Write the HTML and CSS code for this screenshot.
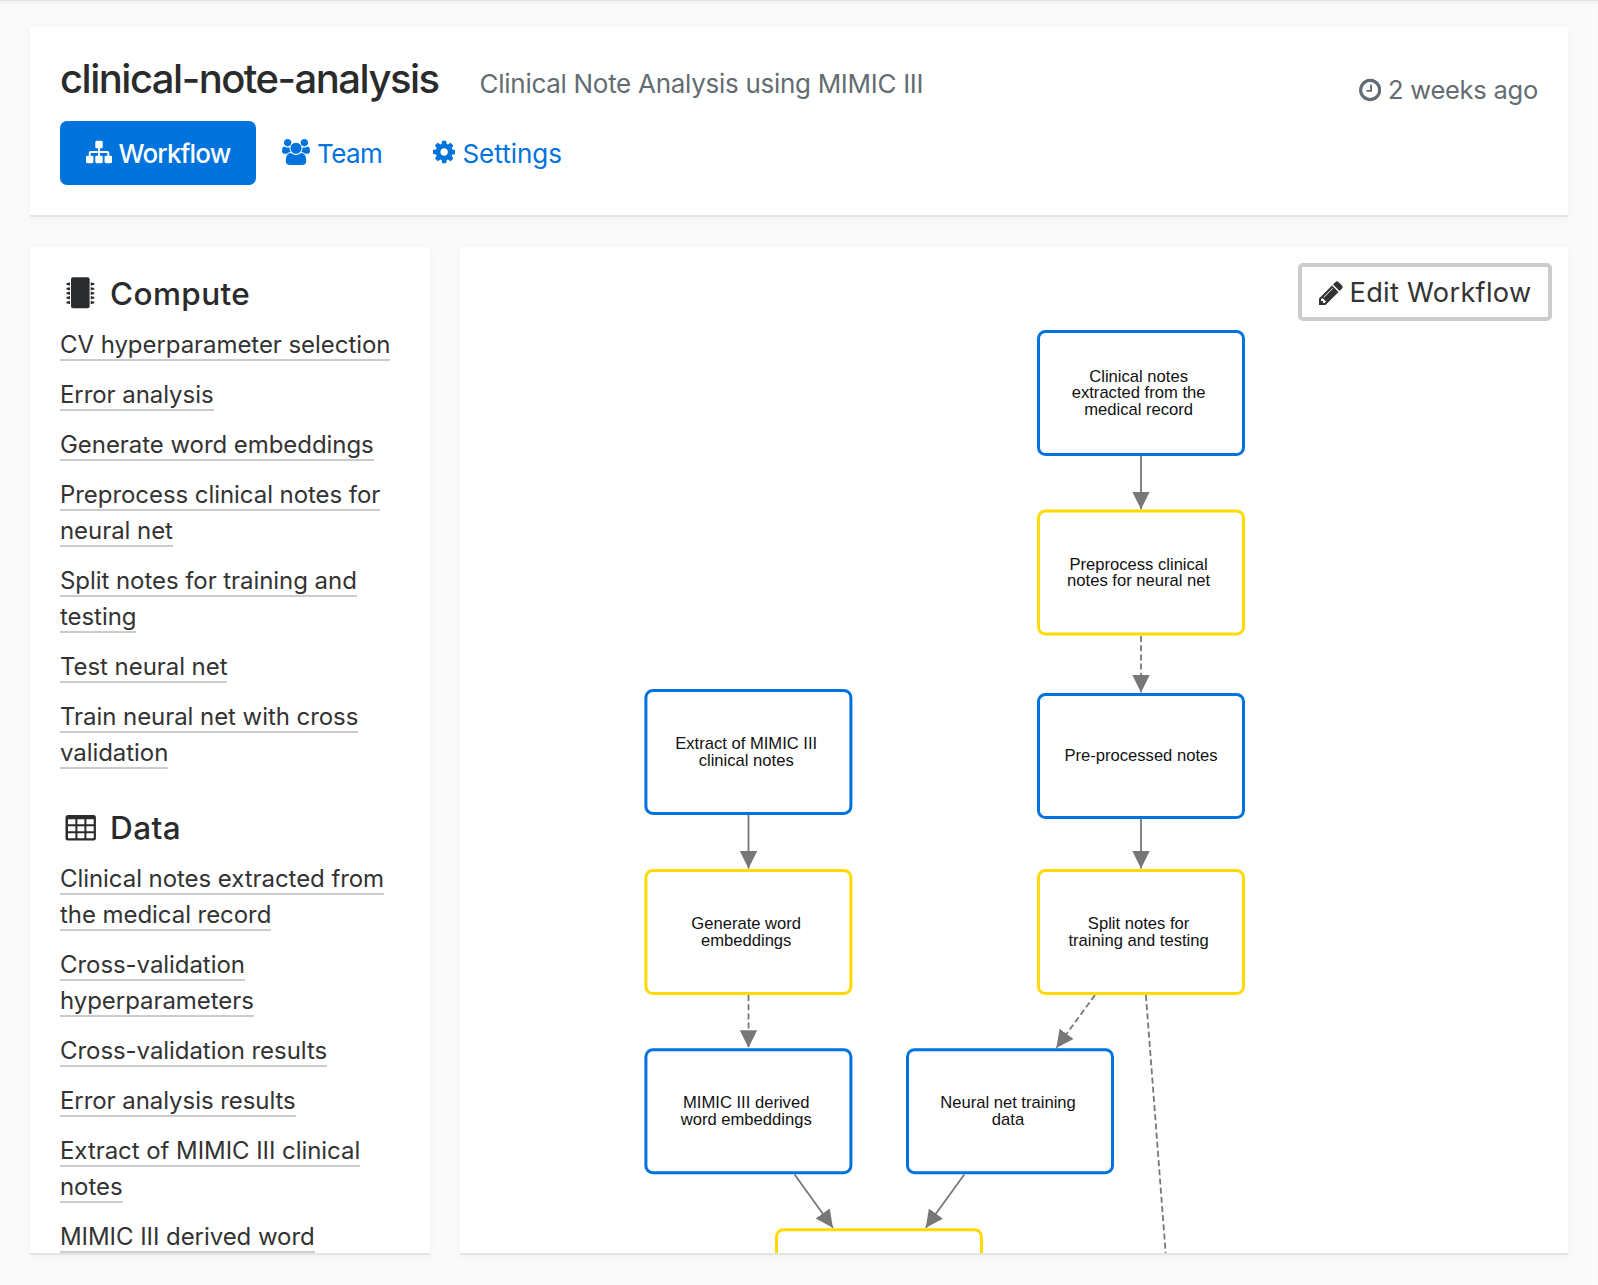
FILE: index.html
```html
<!DOCTYPE html>
<html lang="en">
<head>
<meta charset="utf-8">
<title>clinical-note-analysis</title>
<link rel="stylesheet" href="styles.css">
</head>
<body>
<main class="page">
  <header class="card project">
    <div class="project-main">
      <div class="project-heading">
        <h1 class="project-title">clinical-note-analysis</h1>
        <p class="project-summary">Clinical Note Analysis using MIMIC III</p>
      </div>
      <nav class="tabs">
        <a class="tab tab-active">
          <svg class="icon" width="26" height="26" viewBox="0 0 1792 1792"><path d="M1792 1248v320q0 40-28 68t-68 28h-320q-40 0-68-28t-28-68v-320q0-40 28-68t68-28h96v-192h-512v192h96q40 0 68 28t28 68v320q0 40-28 68t-68 28h-320q-40 0-68-28t-28-68v-320q0-40 28-68t68-28h96v-192h-512v192h96q40 0 68 28t28 68v320q0 40-28 68t-68 28h-320q-40 0-68-28t-28-68v-320q0-40 28-68t68-28h96v-192q0-52 38-90t90-38h512v-192h-96q-40 0-68-28t-28-68v-320q0-40 28-68t68-28h320q40 0 68 28t28 68v320q0 40-28 68t-68 28h-96v192h512q52 0 90 38t38 90v192h96q40 0 68 28t28 68z"/></svg>
          <span class="label-workflow">Workflow</span>
        </a>
        <a class="tab">
          <svg class="icon" width="28" height="26" viewBox="0 0 1920 1792"><path d="M593 896q-162 5-265 128h-134q-82 0-138-40.500t-56-118.500q0-353 124-353 6 0 43.500 21t97.500 42.500 119 21.500q67 0 133-23-5 37-5 66 0 139 81 256zm1071 637q0 120-73 189.500t-194 69.500h-874q-121 0-194-69.500t-73-189.500q0-53 3.500-103.500t14-109 26.500-108.500 43-97.500 62-81 85.500-53.500 111.500-20q10 0 43 21.500t73 48 107 48 135 21.500 135-21.500 107-48 73-48 43-21.500q61 0 111.500 20t85.500 53.500 62 81 43 97.500 26.500 108.500 14 109 3.500 103.500zm-1024-1277q0 106-75 181t-181 75-181-75-75-181 75-181 181-75 181 75 75 181zm704 384q0 159-112.500 271.500t-271.500 112.500-271.500-112.500-112.500-271.500 112.500-271.500 271.500-112.500 271.500 112.500 112.500 271.500zm576 225q0 78-56 118.500t-138 40.500h-134q-103-123-265-128 81-117 81-256 0-29-5-66 66 23 133 23 59 0 119-21.500t97.500-42.500 43.500-21q124 0 124 353zm-128-609q0 106-75 181t-181 75-181-75-75-181 75-181 181-75 181 75 75 181z"/></svg>
          <span class="label-team">Team</span>
        </a>
        <a class="tab">
          <svg class="icon" width="22.300" height="26" viewBox="128 0 1536 1792"><path d="M1152 896q0-106-75-181t-181-75-181 75-75 181 75 181 181 75 181-75 75-181zm512-109v222q0 12-8 23t-20 13l-185 28q-19 54-39 91 35 50 107 138 10 12 10 25t-9 23q-27 37-99 108t-94 71q-12 0-26-9l-138-108q-44 23-91 38-16 136-29 186-7 28-36 28h-222q-14 0-24.500-8.500t-11.500-21.500l-28-184q-49-16-90-37l-141 107q-10 9-25 9-14 0-25-11-126-114-165-168-7-10-7-23 0-12 8-23 15-21 51-66.500t54-70.500q-27-50-41-99l-183-27q-13-2-21-12.500t-8-23.500v-222q0-12 8-23t19-13l186-28q14-46 39-92-40-57-107-138-10-12-10-24 0-10 9-23 26-36 98.500-107.500t94.500-71.500q13 0 26 10l138 107q44-23 91-38 16-136 29-186 7-28 36-28h222q14 0 24.500 8.500t11.500 21.500l28 184q49 16 90 37l142-107q9-9 24-9 13 0 25 10 129 119 165 170 7 8 7 22 0 12-8 23-15 21-51 66.500t-54 70.500q26 50 41 98l183 28q13 2 21 12.500t8 23.500z"/></svg>
          <span class="label-settings">Settings</span>
        </a>
      </nav>
    </div>
    <div class="updated">
      <svg class="icon" width="22.300" height="26" viewBox="128 0 1536 1792"><path d="M1024 544v448q0 14-9 23t-23 9h-320q-14 0-23-9t-9-23v-64q0-14 9-23t23-9h224v-352q0-14 9-23t23-9h64q14 0 23 9t9 23zm416 352q0-148-73-273t-198-198-273-73-273 73-198 198-73 273 73 273 198 198 273 73 273-73 198-198 73-273zm224 0q0 209-103 385.500t-279.500 279.500-385.500 103-385.500-103-279.500-279.500-103-385.500 103-385.500 279.500-279.500 385.500-103 385.500 103 279.500 279.500 103 385.500z"/></svg>
      <span>2 weeks ago</span>
    </div>
  </header>

  <div class="columns">
    <aside class="card sidebar">
      <h2 class="group-title">
        <svg class="group-icon" width="40" height="34" viewBox="0 1.200 40 34">
          <rect x="11" y="1.500" width="18.600" height="31" rx="2"/>
          <path d="M10 6.800H8.500V7.300H6.500V9.300H8.500V9.800H10zM10 11.400H8.500V11.900H6.500V13.900H8.500V14.400H10zM10 15.900H8.500V16.400H6.500V18.400H8.500V18.900H10zM10 20.500H8.500V21H6.500V23H8.500V23.500H10zM10 25.100H8.500V25.600H6.500V27.600H8.500V28.100H10z"/>
          <path d="M30.700 6.800H32.200V7.300H34.200V9.300H32.200V9.800H30.700zM30.700 11.400H32.200V11.900H34.200V13.900H32.200V14.400H30.700zM30.700 15.900H32.200V16.400H34.200V18.400H32.200V18.900H30.700zM30.700 20.500H32.200V21H34.200V23H32.200V23.500H30.700zM30.700 25.100H32.200V25.600H34.200V27.600H32.200V28.100H30.700z"/>
        </svg>
        <span>Compute</span>
      </h2>
      <ul class="links">
        <li><a>CV hyperparameter selection</a></li>
        <li><a>Error analysis</a></li>
        <li><a>Generate word embeddings</a></li>
        <li><a>Preprocess clinical notes for neural net</a></li>
        <li><a>Split notes for training and testing</a></li>
        <li><a>Test neural net</a></li>
        <li><a>Train neural net with cross validation</a></li>
      </ul>
      <h2 class="group-title">
        <svg class="group-icon" width="40" height="34" viewBox="0 0 40 34">
          <path fill-rule="evenodd" d="M8 4H33.400a2.500 2.500 0 0 1 2.500 2.500V27a2.500 2.500 0 0 1-2.500 2.500H8A2.500 2.500 0 0 1 5.500 27V6.500A2.500 2.500 0 0 1 8 4zM8 8.200V13.200H15.400V8.200zM17.400 8.200V13.200H24.400V8.200zM26.400 8.200V13.200H33.700V8.200zM8 15.200V20.200H15.400V15.200zM17.400 15.200V20.200H24.400V15.200zM26.400 15.200V20.200H33.700V15.200zM8 22.200V27.200H15.400V22.200zM17.400 22.200V27.200H24.400V22.200zM26.400 22.200V27.200H33.700V22.200z"/>
        </svg>
        <span>Data</span>
      </h2>
      <ul class="links">
        <li><a>Clinical notes extracted from the medical record</a></li>
        <li><a>Cross-validation hyperparameters</a></li>
        <li><a>Cross-validation results</a></li>
        <li><a>Error analysis results</a></li>
        <li><a>Extract of MIMIC III clinical notes</a></li>
        <li><a>MIMIC III derived word</a></li>
      </ul>
    </aside>

    <section class="card canvas">
      <svg class="graph" width="1108" height="1006" viewBox="460 247 1108 1006">
        <defs>
          <marker id="arrow" markerUnits="userSpaceOnUse" markerWidth="18" markerHeight="18" refX="17.500" refY="8.700" orient="auto">
            <path class="arrow-head" d="M0 0L17.500 8.700L0 17.400z"/>
          </marker>
        </defs>
        <g class="edge">
          <path d="M1141 456V509.300"/>
          <path d="M748.500 815V868.500"/>
          <path d="M1141 819V868.500"/>
          <path d="M794.600 1174.500L832.900 1227.700"/>
          <path d="M964.300 1174.500L925.700 1227.700"/>
        </g>
        <g class="edge edge-dashed">
          <path d="M1141 636V692.500"/>
          <path d="M748.500 995V1047.700"/>
          <path d="M1095 995L1056.300 1048"/>
          <path d="M1145.900 995L1171.700 1332"/>
        </g>
        <g class="node node-data">
          <rect x="1038.500" y="331.500" width="205" height="123" rx="7"/>
          <rect x="1038.500" y="694.500" width="205" height="123" rx="7"/>
          <rect x="645.900" y="690.400" width="205" height="123" rx="7"/>
          <rect x="645.900" y="1049.700" width="205" height="123" rx="7"/>
          <rect x="907.500" y="1049.700" width="205" height="123" rx="7"/>
        </g>
        <g class="node node-compute">
          <rect x="1038.500" y="511" width="205" height="123" rx="7"/>
          <rect x="1038.500" y="870.500" width="205" height="123" rx="7"/>
          <rect x="645.900" y="870.500" width="205" height="123" rx="7"/>
          <rect x="776.500" y="1229.700" width="205" height="123" rx="7"/>
        </g>
        <g class="node-label">
          <text x="1138.600" y="382">Clinical notes</text>
          <text x="1138.600" y="398.300">extracted from the</text>
          <text x="1138.600" y="414.700">medical record</text>
          <text x="1138.600" y="569.700">Preprocess clinical</text>
          <text x="1138.600" y="586">notes for neural net</text>
          <text x="1141" y="761.300">Pre-processed notes</text>
          <text x="1138.600" y="929.300">Split notes for</text>
          <text x="1138.600" y="945.600">training and testing</text>
          <text x="746.200" y="749.300">Extract of MIMIC III</text>
          <text x="746.200" y="765.700">clinical notes</text>
          <text x="746.200" y="929.300">Generate word</text>
          <text x="746.200" y="945.600">embeddings</text>
          <text x="746.200" y="1108.300">MIMIC III derived</text>
          <text x="746.200" y="1124.600">word embeddings</text>
          <text x="1008" y="1108.300">Neural net training</text>
          <text x="1008" y="1124.600">data</text>
        </g>
      </svg>
      <button class="edit" type="button">
        <svg class="icon" width="28" height="28" viewBox="0 0 1792 1792"><path d="M491 1536l91-91-235-235-91 91v107h128v128h107zm523-928q0-22-22-22-10 0-17 7l-542 542q-7 7-7 17 0 22 22 22 10 0 17-7l542-542q7-7 7-17zm-54-192l416 416-832 832h-416v-416zm683 96q0 53-37 90l-166 166-416-416 166-165q36-38 90-38 53 0 91 38l235 234q37 39 37 91z"/></svg>
        <span>Edit Workflow</span>
      </button>
    </section>
  </div>
</main>
</body>
</html>
```
FILE: styles.css
```css
* {
  box-sizing: border-box;
}

body {
  margin: 0;
  height: 1285px;
  overflow: hidden;
  background: #fafafa;
  color: #292b2c;
  font-family: Inter, "Open Sans", sans-serif;
  font-size: 26px;
}

.page {
  height: 1285px;
  padding: 26px 30px 30px;
  border-top: 1px solid #e2e2e2;
  box-shadow: inset 0 3px 4px -1px rgba(0, 0, 0, 0.04);
  display: flex;
  flex-direction: column;
  gap: 30px;
}

.card {
  background: #fff;
  border-bottom: 2px solid #e4e4e4;
  box-shadow: 0 2px 8px rgba(0, 0, 0, 0.04);
}

.icon {
  display: block;
  flex: none;
  fill: currentColor;
}

.project {
  height: 190px;
  flex: none;
  padding: 28px 30px 30px;
  display: flex;
  justify-content: space-between;
  align-items: flex-start;
}

.project-heading {
  display: flex;
  align-items: baseline;
  gap: 41px;
  height: 48px;
}

.project-title {
  margin: 0;
  font-size: 40px;
  font-weight: 500;
  line-height: 48px;
  letter-spacing: -1.5px;
}

.project-summary {
  margin: 0;
  color: #636c72;
  letter-spacing: -0.29px;
}

.tabs {
  display: flex;
  margin-top: 18px;
}

.tab {
  display: flex;
  align-items: center;
  gap: 7px;
  height: 64px;
  padding: 0 25px 0 26px;
  border-radius: 7px;
  color: #0073dd;
  line-height: 65px;
}

.tab .icon {
  margin-top: -2px;
}

.tab-active {
  width: 196px;
  padding: 0 0 0 25.5px;
  background: #0073dd;
  color: #fff;
  font-weight: 500;
}

.label-workflow {
  letter-spacing: -0.85px;
}

.label-team {
  letter-spacing: -0.6px;
}

.label-settings {
  letter-spacing: 0;
}

.updated {
  display: flex;
  align-items: center;
  gap: 7px;
  margin-top: 17px;
  color: #636c72;
  font-size: 25.5px;
  line-height: 36px;
  letter-spacing: -0.25px;
}

.columns {
  flex: 1;
  min-height: 0;
  display: grid;
  grid-template-columns: 400px 1fr;
  gap: 30px;
}

.sidebar {
  overflow: hidden;
  height: 1008px;
  padding: 27px 30px 0;
}

.group-title {
  display: flex;
  align-items: center;
  gap: 10px;
  height: 40px;
  margin: 0 0 13px;
  font-size: 31.5px;
  font-weight: 500;
  line-height: 40px;
  letter-spacing: 0.4px;
}

.group-icon {
  flex: none;
  fill: currentColor;
}

.links {
  margin: 0 0 37px;
  padding: 0;
  list-style: none;
  font-size: 24px;
  line-height: 36px;
  letter-spacing: -0.06px;
  color: #333;
}

.links li + li {
  margin-top: 14px;
}

.links a {
  border-bottom: 2px solid #ccc;
}

.canvas {
  position: relative;
  height: 1008px;
  overflow: hidden;
}

.graph {
  display: block;
}

.edge {
  fill: none;
  stroke: #777;
  stroke-width: 1.8;
}

.edge path {
  marker-end: url(#arrow);
}

.edge-dashed {
  stroke-dasharray: 6 3.2;
}

.arrow-head {
  fill: #777;
}

.node rect {
  fill: #fff;
  stroke-width: 3;
}

.node-data {
  stroke: #0073dd;
}

.node-compute {
  stroke: #ffd900;
}

.node-label {
  fill: #111;
  font-family: "Liberation Sans", Arial, sans-serif;
  font-size: 16.6px;
  text-anchor: middle;
}

.edit {
  position: absolute;
  top: 16px;
  right: 16px;
  display: flex;
  align-items: center;
  gap: 5px;
  width: 254px;
  height: 58px;
  padding: 1px 0 0 14.5px;
  border: 4px solid #ccc;
  border-radius: 5px;
  background: #fff;
  color: #333;
  font-family: inherit;
  font-size: 27.2px;
  letter-spacing: 0.3px;
  white-space: nowrap;
}
```
